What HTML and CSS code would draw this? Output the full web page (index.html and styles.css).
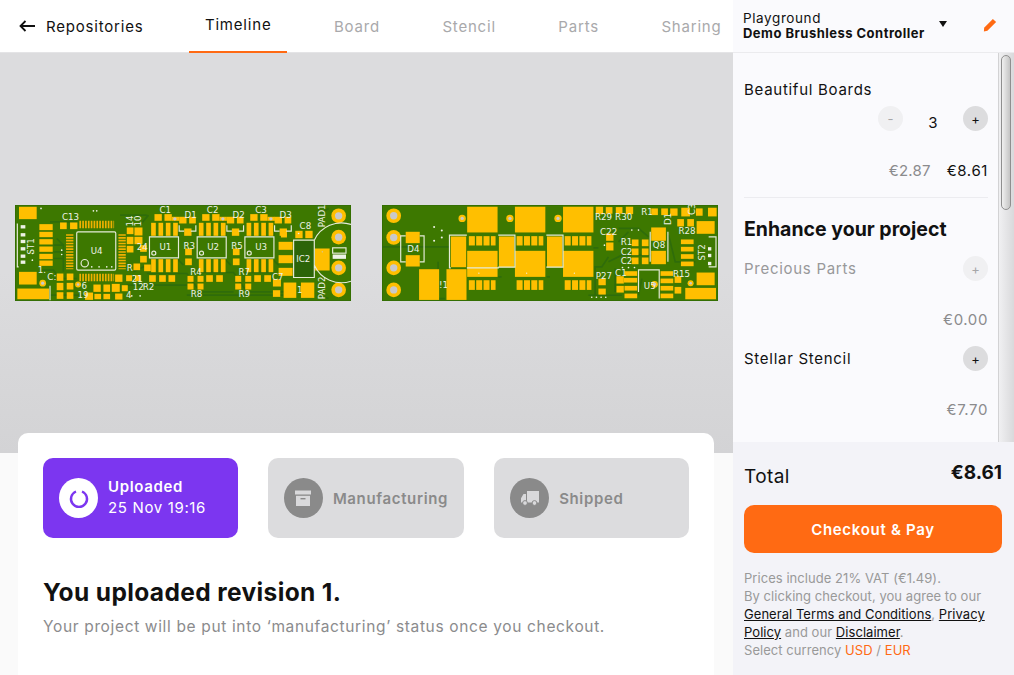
FILE: index.html
```html
<!DOCTYPE html>
<html lang="en">
<head>
<meta charset="utf-8">
<title>Demo Brushless Controller</title>
<link rel="stylesheet" href="styles.css">
</head>
<body>
<div class="app">
  <main class="main">
    <header class="topbar">
      <a class="back">
        <svg class="back-icon" viewBox="0 0 16 12" width="16" height="12"><path d="M16 6H2M6.5 1 1.5 6l5 5" fill="none" stroke="#111" stroke-width="1.8"/></svg>
        <span>Repositories</span>
      </a>
      <nav class="tabs">
        <a class="tab tab-active">Timeline</a>
        <a class="tab">Board</a>
        <a class="tab">Stencil</a>
        <a class="tab">Parts</a>
        <a class="tab">Sharing</a>
      </nav>
    </header>

    <section class="canvas">
      <svg class="pcb" viewBox="45 30 1007 287" width="336" height="96">
        <rect class="sub" x="45" y="30" width="1007" height="287"/>
        <g class="trk">
          <path d="M150 80H230M160 250H230M420 90 445 60M440 235H560L600 290H700M585 232H700L740 290H860M730 232H820M120 225H160L180 250M170 130 190 150V230M360 60H440M535 100V130M678 100V130M822 100V130M380 270H560M150 300H250M560 300H850"/>
          <path d="M530 190 550 210M672 190 692 210M815 190 835 210M160 150H190M160 170H190M160 190H190M400 230 440 210M950 60 985 40M950 300 985 310"/>
        </g>
        <rect class="dark" x="880" y="135" width="62" height="112"/>
        <g class="pad">
          <rect x="57" y="35" width="53" height="37"/><rect x="57" y="230" width="53" height="38"/><rect x="52" y="280" width="95" height="32"/>
          <rect x="118" y="87" width="40" height="18"/><rect x="118" y="110" width="40" height="16"/><rect x="118" y="132" width="40" height="16"/><rect x="118" y="154" width="40" height="16"/><rect x="118" y="176" width="40" height="16"/><rect x="118" y="196" width="40" height="16"/>
          <rect x="180" y="82" width="20" height="20"/><rect x="210" y="82" width="22" height="20"/>
          <rect x="380" y="97" width="20" height="20"/><rect x="403" y="97" width="24" height="24"/><rect x="380" y="125" width="20" height="22"/><rect x="403" y="125" width="24" height="22"/><rect x="380" y="152" width="20" height="20"/><rect x="420" y="150" width="20" height="20"/><rect x="420" y="182" width="20" height="20"/><rect x="400" y="205" width="20" height="20"/><rect x="432" y="208" width="20" height="20"/>
          <rect x="170" y="235" width="20" height="22"/><rect x="200" y="235" width="20" height="20"/><rect x="170" y="263" width="20" height="22"/><rect x="200" y="263" width="20" height="20"/><rect x="170" y="291" width="20" height="20"/><rect x="200" y="291" width="20" height="20"/>
          <rect x="345" y="238" width="22" height="22"/><rect x="378" y="240" width="18" height="18"/><rect x="405" y="240" width="18" height="18"/><rect x="255" y="292" width="24" height="22"/><rect x="280" y="268" width="22" height="22"/><rect x="310" y="268" width="20" height="22"/><rect x="335" y="266" width="24" height="24"/><rect x="365" y="270" width="18" height="18"/><rect x="283" y="296" width="20" height="16"/><rect x="310" y="296" width="20" height="16"/><rect x="345" y="295" width="22" height="18"/>
          <rect x="463" y="57" width="22" height="20"/><rect x="493" y="57" width="22" height="20"/><rect x="515" y="65" width="22" height="12"/><rect x="537" y="65" width="22" height="20"/><rect x="567" y="65" width="20" height="20"/><rect x="552" y="100" width="22" height="22"/><rect x="555" y="160" width="20" height="20"/><rect x="555" y="190" width="20" height="20"/>
          <rect x="453" y="83" width="14" height="39"/><rect x="475" y="83" width="14" height="39"/><rect x="497" y="83" width="14" height="39"/><rect x="519" y="83" width="14" height="39"/><rect x="453" y="192" width="14" height="39"/><rect x="475" y="192" width="14" height="39"/><rect x="497" y="192" width="14" height="39"/><rect x="519" y="192" width="14" height="39"/>
          <rect x="447" y="240" width="20" height="20"/><rect x="477" y="240" width="20" height="20"/><rect x="505" y="240" width="20" height="20"/><rect x="562" y="242" width="18" height="18"/><rect x="592" y="242" width="18" height="18"/><rect x="562" y="265" width="18" height="18"/><rect x="592" y="265" width="18" height="18"/>
          <rect x="606" y="57" width="22" height="20"/><rect x="636" y="57" width="22" height="20"/><rect x="658" y="65" width="22" height="12"/><rect x="680" y="65" width="22" height="20"/><rect x="710" y="65" width="20" height="20"/><rect x="695" y="100" width="22" height="22"/><rect x="698" y="160" width="20" height="20"/><rect x="698" y="190" width="20" height="20"/>
          <rect x="596" y="83" width="14" height="39"/><rect x="618" y="83" width="14" height="39"/><rect x="640" y="83" width="14" height="39"/><rect x="662" y="83" width="14" height="39"/><rect x="596" y="192" width="14" height="39"/><rect x="618" y="192" width="14" height="39"/><rect x="640" y="192" width="14" height="39"/><rect x="662" y="192" width="14" height="39"/>
          <rect x="618" y="240" width="20" height="20"/><rect x="648" y="240" width="20" height="20"/><rect x="705" y="242" width="18" height="18"/><rect x="735" y="242" width="18" height="18"/><rect x="705" y="265" width="18" height="18"/><rect x="735" y="265" width="18" height="18"/>
          <rect x="750" y="57" width="22" height="20"/><rect x="780" y="57" width="22" height="20"/><rect x="802" y="65" width="22" height="12"/><rect x="823" y="65" width="22" height="20"/><rect x="853" y="65" width="20" height="20"/><rect x="838" y="100" width="22" height="22"/>
          <rect x="739" y="83" width="14" height="39"/><rect x="761" y="83" width="14" height="39"/><rect x="783" y="83" width="14" height="39"/><rect x="805" y="83" width="14" height="39"/><rect x="739" y="192" width="14" height="39"/><rect x="761" y="192" width="14" height="39"/><rect x="783" y="192" width="14" height="39"/><rect x="805" y="192" width="14" height="39"/>
          <rect x="762" y="240" width="20" height="20"/><rect x="792" y="240" width="20" height="20"/>
          <rect x="842" y="103" width="18" height="24"/><rect x="885" y="107" width="22" height="22"/><rect x="915" y="107" width="22" height="22"/><rect x="835" y="140" width="42" height="24"/><rect x="835" y="180" width="42" height="24"/><rect x="835" y="218" width="42" height="24"/><rect x="944" y="160" width="44" height="66"/>
          <rect x="818" y="252" width="24" height="22"/><rect x="818" y="285" width="22" height="20"/><rect x="850" y="262" width="38" height="46"/><rect x="902" y="262" width="40" height="46"/>
          <circle cx="1015" cy="62" r="22"/><circle cx="1015" cy="126" r="22"/><circle cx="1015" cy="218" r="22"/><circle cx="1015" cy="284" r="22"/><circle cx="128" cy="264" r="10"/><circle cx="234" cy="268" r="9"/>
        </g>
        <g class="holes">
          <circle cx="1015" cy="62" r="11"/><circle cx="1015" cy="126" r="11"/><circle cx="1015" cy="218" r="11"/><circle cx="1015" cy="284" r="11"/><circle cx="128" cy="264" r="5"/><circle cx="234" cy="268" r="4"/><circle cx="524" cy="71" r="5"/><circle cx="668" cy="71" r="5"/><circle cx="812" cy="71" r="5"/><circle cx="966" cy="170" r="2"/>
        </g>
        <g class="stripes">
          <line x1="209" y1="117" x2="209" y2="222"/><line x1="366" y1="117" x2="366" y2="222"/>
          <line x1="238" y1="88" x2="342" y2="88"/><line x1="238" y1="247" x2="342" y2="247"/>
        </g>
        <g class="silk">
          <rect x="230" y="110" width="117" height="115" rx="4"/><circle cx="254" cy="204" r="11"/><circle cx="461" cy="174" r="6"/><circle cx="604" cy="174" r="6"/><circle cx="747" cy="174" r="6"/>
          <path d="M448 190V125H535V190M448 188H535M591 190V125H678V190M591 188H678M734 190V125H821V190M734 188H821M537 90V108H552M587 90V108H572M680 90V108H695M730 90V108H715M823 90V108H838M873 90V108H858M880 135H942V247H880ZM942 135A90 90 0 0 1 1052 88M942 210A90 90 0 0 0 1052 258M52 85V215H56M150 272V315"/>
          <rect x="997" y="158" width="40" height="16"/>
        </g>
        <g class="white">
          <rect x="997" y="178" width="40" height="13"/><rect x="62" y="90" width="14" height="10"/><rect x="62" y="114" width="14" height="10"/><rect x="62" y="134" width="14" height="10"/><rect x="62" y="156" width="14" height="10"/><rect x="62" y="178" width="14" height="10"/><rect x="62" y="196" width="14" height="10"/>
          <circle cx="97" cy="175" r="2.5"/><circle cx="97" cy="195" r="2.5"/><circle cx="280" cy="47" r="2.5"/><circle cx="290" cy="47" r="2.5"/><circle cx="185" cy="165" r="2.5"/><circle cx="185" cy="178" r="2.5"/><circle cx="275" cy="215" r="2.5"/><circle cx="297" cy="215" r="2.5"/><circle cx="320" cy="215" r="2.5"/><circle cx="335" cy="215" r="2.5"/><circle cx="395" cy="302" r="2.5"/><circle cx="420" cy="302" r="2.5"/><circle cx="123" cy="40" r="2.5"/><circle cx="895" cy="115" r="2.5"/>
        </g>
        <g class="label">
          <text x="186" y="76">C13</text><text x="272" y="178">U4</text><text x="478" y="54">C1</text><text x="620" y="54">C2</text><text x="765" y="54">C3</text><text x="553" y="68">D1</text><text x="697" y="68">D2</text><text x="838" y="68">D3</text><text x="478" y="166">U1</text><text x="621" y="166">U2</text><text x="765" y="166">U3</text><text x="550" y="162">R3</text><text x="693" y="162">R5</text><text x="570" y="238">R4</text><text x="715" y="238">R7</text><text x="572" y="304">R8</text><text x="715" y="304">R9</text><text x="898" y="103">C8</text><text x="888" y="202">IC2</text><text x="428" y="284">R2</text><text x="398" y="284">12</text><text x="395" y="260">21</text><text x="142" y="254">C:</text><text x="244" y="282">6</text><text x="232" y="309">19</text><text x="378" y="309">4</text><text x="380" y="226">R</text><text x="410" y="166">24</text><text x="890" y="292">1</text><text x="815" y="254">C7</text><text x="113" y="232">1.</text>
          <text transform="translate(102 178) rotate(-90)">ST1</text><text transform="translate(400 94) rotate(-90)">14</text><text transform="translate(424 94) rotate(-90)">10</text><text transform="translate(975 96) rotate(-90)">PAD1</text><text transform="translate(975 312) rotate(-90)">PAD2</text>
        </g>
      </svg>

      <svg class="pcb" viewBox="22 30 1006 287" width="336" height="96">
        <rect class="sub" x="22" y="30" width="1006" height="287"/>
        <g class="trk">
          <path d="M22 155H225M190 200V310H210M370 245H380M515 245H525M655 158H670M700 185 680 215H660V300M730 100H790L820 125M730 140 760 110M700 200 740 180H830M720 220 720 290M640 300H740M880 120 900 200H960M910 100H960M790 300 800 250"/>
        </g>
        <g class="pad">
          <circle cx="57" cy="62" r="22"/><circle cx="57" cy="127" r="22"/><circle cx="57" cy="218" r="22"/><circle cx="57" cy="284" r="22"/><circle cx="262" cy="70" r="11"/><circle cx="405" cy="70" r="11"/><circle cx="549" cy="70" r="11"/><circle cx="838" cy="267" r="10"/><circle cx="946" cy="264" r="9"/>
          <rect x="93" y="110" width="42" height="34"/><rect x="93" y="180" width="42" height="34"/><rect x="133" y="222" width="60" height="92"/><rect x="215" y="222" width="60" height="92"/>
          <rect x="277" y="35" width="91" height="77"/><rect x="420" y="35" width="91" height="77"/><rect x="564" y="35" width="91" height="77"/>
          <rect x="228" y="124" width="46" height="92"/><rect x="372" y="124" width="46" height="92"/><rect x="516" y="124" width="46" height="92"/>
          <rect x="277" y="167" width="91" height="78"/><rect x="420" y="167" width="91" height="78"/><rect x="564" y="167" width="91" height="78"/>
          <rect x="282" y="123" width="18" height="28"/><rect x="304" y="123" width="18" height="28"/><rect x="326" y="123" width="18" height="28"/><rect x="348" y="123" width="14" height="28"/><rect x="425" y="123" width="18" height="28"/><rect x="447" y="123" width="18" height="28"/><rect x="469" y="123" width="18" height="28"/><rect x="491" y="123" width="14" height="28"/><rect x="569" y="123" width="18" height="28"/><rect x="591" y="123" width="18" height="28"/><rect x="613" y="123" width="18" height="28"/><rect x="635" y="123" width="14" height="28"/>
          <rect x="282" y="255" width="18" height="29"/><rect x="304" y="255" width="18" height="29"/><rect x="326" y="255" width="18" height="29"/><rect x="348" y="255" width="14" height="29"/><rect x="425" y="255" width="18" height="29"/><rect x="447" y="255" width="18" height="29"/><rect x="469" y="255" width="18" height="29"/><rect x="491" y="255" width="14" height="29"/><rect x="569" y="255" width="18" height="29"/><rect x="591" y="255" width="18" height="29"/><rect x="613" y="255" width="18" height="29"/><rect x="635" y="255" width="14" height="29"/>
          <rect x="662" y="35" width="22" height="22"/><rect x="692" y="36" width="20" height="20"/><rect x="722" y="36" width="20" height="20"/><rect x="752" y="35" width="22" height="22"/><rect x="828" y="40" width="20" height="20"/><rect x="858" y="40" width="20" height="20"/><rect x="885" y="40" width="22" height="22"/><rect x="918" y="38" width="26" height="26"/><rect x="962" y="40" width="20" height="22"/><rect x="998" y="38" width="26" height="26"/>
          <rect x="906" y="72" width="20" height="22"/><rect x="936" y="72" width="20" height="22"/><rect x="964" y="78" width="54" height="38"/><rect x="693" y="115" width="22" height="22"/><rect x="693" y="142" width="22" height="24"/>
          <rect x="828" y="97" width="44" height="40"/><rect x="828" y="167" width="44" height="40"/><rect x="770" y="133" width="20" height="20"/><rect x="800" y="133" width="20" height="20"/><rect x="770" y="160" width="20" height="20"/><rect x="800" y="160" width="20" height="20"/><rect x="770" y="187" width="20" height="20"/><rect x="800" y="187" width="20" height="20"/>
          <rect x="917" y="133" width="38" height="14"/><rect x="917" y="155" width="38" height="14"/><rect x="917" y="177" width="38" height="14"/><rect x="917" y="199" width="38" height="14"/><rect x="964" y="232" width="54" height="38"/><rect x="930" y="278" width="92" height="34"/>
          <rect x="670" y="250" width="22" height="20"/><rect x="670" y="280" width="22" height="18"/><rect x="724" y="243" width="22" height="22"/><rect x="724" y="272" width="22" height="20"/><rect x="748" y="228" width="38" height="14"/><rect x="746" y="248" width="40" height="14"/><rect x="748" y="272" width="38" height="14"/><rect x="748" y="295" width="38" height="14"/><rect x="856" y="228" width="38" height="14"/><rect x="856" y="250" width="38" height="14"/><rect x="856" y="272" width="38" height="14"/><rect x="856" y="295" width="38" height="14"/><rect x="898" y="243" width="20" height="20"/><rect x="898" y="275" width="20" height="20"/>
        </g>
        <g class="holes">
          <circle cx="57" cy="62" r="11"/><circle cx="57" cy="127" r="11"/><circle cx="57" cy="218" r="11"/><circle cx="57" cy="284" r="11"/><circle cx="262" cy="70" r="5"/><circle cx="405" cy="70" r="5"/><circle cx="549" cy="70" r="5"/><circle cx="838" cy="267" r="5"/><circle cx="946" cy="264" r="4"/>
        </g>
        <g class="silk">
          <path d="M93 122H78V200H93M135 122H148V200H135M228 218H224V120H276M370 120H420V216H370M514 120H564V216H514M276 218H372M790 290V224H852V310M878 110V200M825 110V200M1000 125H1022V215H1000"/>
        </g>
        <g class="white">
          <rect x="998" y="156" width="10" height="10"/><rect x="998" y="176" width="10" height="10"/><rect x="998" y="200" width="10" height="10"/>
          <circle cx="178" cy="96" r="3"/><circle cx="201" cy="106" r="3"/><circle cx="201" cy="127" r="3"/><circle cx="178" cy="137" r="3"/><circle cx="688" cy="150" r="2.5"/><circle cx="650" cy="306" r="2.5"/><circle cx="664" cy="306" r="2.5"/><circle cx="678" cy="306" r="2.5"/><circle cx="692" cy="306" r="2.5"/><circle cx="742" cy="217" r="2.5"/><circle cx="760" cy="217" r="2.5"/><circle cx="778" cy="217" r="2.5"/><circle cx="312" cy="234" r="2"/><circle cx="455" cy="234" r="2"/><circle cx="598" cy="234" r="2"/><circle cx="770" cy="105" r="2.5"/><circle cx="790" cy="105" r="2.5"/>
        </g>
        <g class="label">
          <text x="98" y="172">D4</text><text x="193" y="278">!1</text><text x="660" y="76">R29</text><text x="720" y="76">R30</text><text x="798" y="60">R1</text><text x="910" y="116">R28</text><text x="675" y="120">C22</text><text x="737" y="150">R1</text><text x="737" y="180">C2</text><text x="737" y="206">C2</text><text x="833" y="160">Q8</text><text x="662" y="252">P27</text><text x="720" y="242">C1</text><text x="806" y="280">U5</text><text x="893" y="246">R15</text>
          <text transform="translate(990 196) rotate(-90)">ST2</text><text transform="translate(886 90) rotate(-90)">D1</text><text transform="translate(958 60) rotate(-90)">C3</text>
        </g>
      </svg>
    </section>

    <section class="lower">
      <article class="card">
        <div class="stages">
          <div class="stage stage-on">
            <span class="badge badge-on">
              <svg viewBox="0 0 24 24" width="24" height="24"><path d="M9 5.5a8 8 0 1 0 6 0" fill="none" stroke="#7c36f0" stroke-width="2.4"/></svg>
            </span>
            <div class="stage-text"><strong>Uploaded</strong><span>25 Nov 19:16</span></div>
          </div>
          <div class="stage">
            <span class="badge">
              <svg viewBox="0 0 18 18" width="18" height="18"><path d="M1 1.5h16v4H1z" fill="#d9d9db"/><path d="M2 6.8h14V17H2z" fill="#d9d9db"/><path d="M6.5 9h5v1.4h-5z" fill="#8a8a8a"/></svg>
            </span>
            <div class="stage-text stage-solo"><strong>Manufacturing</strong></div>
          </div>
          <div class="stage">
            <span class="badge">
              <svg viewBox="0 0 20 16" width="20" height="16"><path d="M7 1h12v11.5H7zM6 4v8.5H1V8.2L3.5 4z" fill="#d9d9db"/><circle cx="5" cy="13" r="2.4" fill="#d9d9db" stroke="#8a8a8a"/><circle cx="14.500" cy="13" r="2.4" fill="#d9d9db" stroke="#8a8a8a"/></svg>
            </span>
            <div class="stage-text stage-solo"><strong>Shipped</strong></div>
          </div>
        </div>
        <h1 class="title">You uploaded revision 1.</h1>
        <p class="note">Your project will be put into ‘manufacturing’ status once you checkout.</p>
      </article>
    </section>
  </main>

  <aside class="side">
    <header class="side-head">
      <div class="repo"><span>Playground</span><strong>Demo Brushless Controller</strong></div>
      <span class="caret"></span>
      <svg class="pencil" viewBox="0 0 16 16" width="14" height="14"><path d="M11.300 1 15 4.700 5 14.700 1 15.500 1.300 11z" fill="#ff6a13"/></svg>
    </header>
    <div class="side-body">
      <div class="items">
        <div class="item item-first">
          <div class="item-name">Beautiful Boards</div>
          <div class="qty">
            <span class="round round-off">-</span>
            <span class="qty-num">3</span>
            <span class="round">+</span>
          </div>
          <div class="prices"><span class="muted muted-unit">€2.87</span><span>€8.61</span></div>
        </div>
        <h2 class="enhance">Enhance your project</h2>
        <div class="addon addon-off">
          <span class="item-name">Precious Parts</span><span class="round round-off">+</span>
        </div>
        <div class="prices addon-price"><span class="muted">€0.00</span></div>
        <div class="addon addon-second">
          <span class="item-name">Stellar Stencil</span><span class="round">+</span>
        </div>
        <div class="prices addon-price"><span class="muted">€7.70</span></div>
      </div>
      <div class="rail"><span class="thumb"></span></div>
    </div>
    <footer class="side-foot">
      <div class="total"><span class="total-label">Total</span><strong>€8.61</strong></div>
      <button class="pay">Checkout &amp; Pay</button>
      <p class="legal">Prices include 21% VAT (€1.49).<br>By clicking checkout, you agree to our<br><a>General Terms and Conditions</a>, <a>Privacy<br>Policy</a> and our <a>Disclaimer</a>.<br>Select currency <em>USD</em> / <em>EUR</em></p>
    </footer>
  </aside>
</div>
</body>
</html>
```
FILE: styles.css
```css
* { box-sizing: border-box; }
html, body { margin: 0; height: 100%; }
body { font-family: Inter, "Liberation Sans", sans-serif; color: #111; background: #fafafa; overflow: hidden; }
.app { display: flex; width: 1014px; height: 675px; overflow: hidden; }

.main { width: 733px; height: 675px; display: flex; flex-direction: column; overflow: hidden; }
.topbar { height: 53px; flex: none; display: flex; background: #fff; border-bottom: 1px solid #e4e4e6; padding-left: 19px; }
.back { display: flex; align-items: center; gap: 11px; font-size: 15px; letter-spacing: .8px; color: #111; height: 52px; }
.tabs { display: flex; gap: 30.500px; margin-left: 45.500px; }
.tab { height: 53px; padding: 0 16px; display: flex; align-items: center; font-size: 15px; letter-spacing: .8px; color: #a9a9ab; white-space: nowrap; }
.tab-active { color: #111; padding-bottom: 2px; border-bottom: 2px solid #ff6a13; }

.canvas { height: 400px; flex: none; display: flex; align-items: center; gap: 31px; padding-left: 15px; background: linear-gradient(#dcdcde 55%, #d3d3d5); }
.pcb { flex: none; display: block; }
.sub { fill: #3d7800; stroke: #2f6a00; stroke-width: 4; }
.trk path { fill: none; stroke: #2f6c0a; stroke-width: 5; }
.dark { fill: #2c6408; }
.pad { fill: #ffbf00; }
.holes { fill: #c9c9c9; }
.stripes line { stroke: #f0b000; stroke-width: 22; stroke-dasharray: 5 3.500; }
.silk { fill: none; stroke: #e6ebd8; stroke-width: 3.500; }
.white { fill: #eef2e6; }
.label text { font-family: "DejaVu Sans", sans-serif; font-size: 26px; fill: #eef2e6; }

.lower { flex: 1; position: relative; background: #fafafa; padding: 0 19px 0 18px; }
.card { margin-top: -20px; height: 300px; background: #fff; border-radius: 10px 10px 0 0; padding: 25px; }
.stages { display: flex; gap: 30px; }
.stage { flex: 1; height: 80px; border-radius: 10px; background: #dcdcde; display: flex; align-items: center; gap: 10px; padding: 0 16px; color: #8a8a8a; }
.stage-on { background: #7c36f0; color: #fff; }
.badge { width: 39px; height: 40px; border-radius: 50%; background: #8a8a8a; display: flex; align-items: center; justify-content: center; flex: none; }
.badge-on { background: #fff; }
.stage-text { display: flex; flex-direction: column; gap: 2px; padding-bottom: 2px; font-size: 15px; letter-spacing: .65px; white-space: nowrap; }
.stage-text strong { font-weight: 600; }
.stage-solo { padding: 1px 0 0; }
.title { margin: 39px 0 0; font-size: 24.500px; line-height: 30px; font-weight: 700; letter-spacing: .37px; color: #111; }
.note { margin: 10px 0 0; font-size: 15.500px; line-height: 20px; letter-spacing: .65px; color: #8b8b8d; white-space: nowrap; }

.side { width: 281px; height: 675px; flex: none; display: flex; flex-direction: column; background: #fafafd; }
.side-head { height: 53px; flex: none; display: flex; align-items: center; padding: 0 17px 0 10px; border-bottom: 1px solid #ebebee; }
.repo { display: flex; flex-direction: column; font-size: 13.500px; letter-spacing: .6px; line-height: 15px; width: 196px; white-space: nowrap; }
.repo strong { font-size: 13px; font-weight: 700; letter-spacing: .48px; }
.caret { width: 0; height: 0; border-style: solid; border-width: 6px 4px 0; border-color: #111 transparent transparent; margin-top: -4px; }
.pencil { margin-left: auto; margin-top: -3px; }

.side-body { flex: none; height: 389px; display: flex; overflow: hidden; }
.items { width: 265px; padding: 0 10px 0 11px; flex: none; font-size: 15px; }
.item-first { padding-top: 27px; height: 145px; border-bottom: 1px solid #ececf0; }
.item-name { font-size: 15px; line-height: 20px; letter-spacing: .72px; }
.qty { display: flex; justify-content: flex-end; align-items: center; margin-top: 5px; }
.qty-num { width: 60px; text-align: center; padding-top: 8px; }
.round { width: 25px; height: 25px; border-radius: 50%; background: #dcdcde; display: flex; align-items: center; justify-content: center; font-size: 13px; color: #111; flex: none; }
.round-off { background: #f0f0f2; color: #a6a6a8; }
.prices { display: flex; justify-content: flex-end; gap: 16px; font-size: 15px; line-height: 20px; letter-spacing: .6px; margin-top: 29px; }
.muted { color: #8b8b8d; }
.muted-unit { letter-spacing: .2px; }
.enhance { margin: 17px 0 0; font-size: 19.500px; line-height: 28px; font-weight: 700; color: #111; }
.addon { display: flex; justify-content: space-between; align-items: center; height: 25px; margin-top: 13px; }
.addon-off .item-name { color: #98989a; }
.addon-price { margin-top: 29px; }
.addon-second { margin-top: 16px; }
.addon-second + .addon-price { margin-top: 29px; }

.rail { width: 16px; flex: none; background: linear-gradient(90deg, #f0f0f2, #d9d9db); padding: 2px 4px 0 2px; border-left: 1px solid #d2d2d4; }
.thumb { display: block; width: 10px; height: 155px; border: 1px solid #8f8f8f; border-radius: 5px; background: linear-gradient(90deg, #f0f0f0, #c4c4c4); }

.side-foot { flex: 1; background: #f3f3f8; padding: 21px 12px 0 11px; }
.total { display: flex; justify-content: space-between; align-items: flex-start; height: 42px; }
.total-label { font-size: 19px; line-height: 28px; letter-spacing: .4px; }
.total strong { font-size: 19px; line-height: 20px; font-weight: 700; }
.pay { display: block; width: 258px; height: 48px; border: 0; border-radius: 10px; background: #ff6a13; color: #fff; font: 600 15px Inter, "Liberation Sans", sans-serif; letter-spacing: .7px; }
.legal { margin: 16px 0 0; font-size: 13px; line-height: 18px; letter-spacing: .05px; color: #999; white-space: nowrap; }
.legal a { color: #111; text-decoration: underline; }
.legal em { font-style: normal; color: #ff6a13; }
```
